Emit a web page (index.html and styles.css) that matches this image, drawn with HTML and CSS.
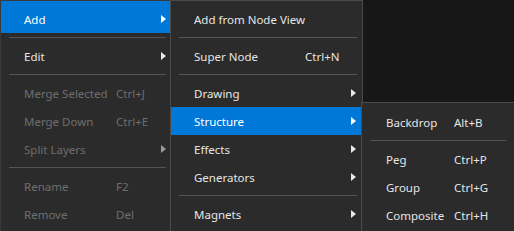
FILE: index.html
```html
<!DOCTYPE html>
<html>
<head>
<meta charset="utf-8">
<link rel="stylesheet" href="styles.css">
</head>
<body>
<div class="stage">
  <div class="menu menu-main">
    <div class="item active first"><span class="label">Add</span><span class="key"></span><span class="arrow"></span></div>
    <div class="sep"></div>
    <div class="item"><span class="label">Edit</span><span class="key"></span><span class="arrow"></span></div>
    <div class="sep"></div>
    <div class="item disabled"><span class="label">Merge Selected</span><span class="key">Ctrl+J</span></div>
    <div class="item disabled"><span class="label">Merge Down</span><span class="key">Ctrl+E</span></div>
    <div class="item disabled"><span class="label">Split Layers</span><span class="key"></span><span class="arrow"></span></div>
    <div class="sep"></div>
    <div class="item disabled"><span class="label">Rename</span><span class="key">F2</span></div>
    <div class="item disabled"><span class="label">Remove</span><span class="key">Del</span></div>
  </div>

  <div class="menu menu-add">
    <div class="item"><span class="label">Add from Node View</span></div>
    <div class="sep"></div>
    <div class="item"><span class="label">Super Node</span><span class="key">Ctrl+N</span></div>
    <div class="sep"></div>
    <div class="item"><span class="label">Drawing</span><span class="key"></span><span class="arrow"></span></div>
    <div class="item active"><span class="label">Structure</span><span class="key"></span><span class="arrow"></span></div>
    <div class="item"><span class="label">Effects</span><span class="key"></span><span class="arrow"></span></div>
    <div class="item"><span class="label">Generators</span><span class="key"></span><span class="arrow"></span></div>
    <div class="sep"></div>
    <div class="item"><span class="label">Magnets</span><span class="key"></span><span class="arrow"></span></div>
  </div>

  <div class="menu menu-structure">
    <div class="item"><span class="label">Backdrop</span><span class="key">Alt+B</span></div>
    <div class="sep"></div>
    <div class="item"><span class="label">Peg</span><span class="key">Ctrl+P</span></div>
    <div class="item"><span class="label">Group</span><span class="key">Ctrl+G</span></div>
    <div class="item"><span class="label">Composite</span><span class="key">Ctrl+H</span></div>
  </div>
</div>
</body>
</html>
```
FILE: styles.css
```css
html, body {
  margin: 0;
  padding: 0;
  background: #171717;
  overflow: hidden;
}

.stage {
  position: relative;
  width: 514px;
  height: 231px;
  overflow: hidden;
  font-family: "Noto Sans", "Open Sans", sans-serif;
  font-size: 11.5px;
  color: #e6e6e6;
}

.menu {
  box-sizing: border-box;
  background: #2b2b2b;
  border: 1px solid #444444;
  padding: 4px 0;
}

.menu-main {
  width: 171px;
  height: 260px;
  border-color: #3a3a3a;
  --label: 92px;
  --pl: 23px;
  --pr: 4px;
  --sep-r: 4px;
}

.menu-add {
  position: absolute;
  left: 170px;
  top: 0;
  width: 193px;
  height: 260px;
  border-color: #4a4a4a;
  --label: 111px;
  --pl: 23px;
  --pr: 6px;
  --sep-r: 5px;
}

.menu-structure {
  position: absolute;
  left: 361px;
  top: 102px;
  width: 170px;
  height: 160px;
  padding-top: 5px;
  border-color: #4a4a4a;
  --label: 68px;
  --pl: 24px;
  --pr: 6px;
  --sep-r: 24px;
}

.item {
  display: grid;
  grid-template-columns: var(--label) 1fr 5px;
  align-items: center;
  height: 28px;
  padding: 0 var(--pr) 0 var(--pl);
  white-space: nowrap;
}

.item.first.active {
  margin-top: -4px;
  padding-top: 4px;
  height: 32px;
  box-sizing: border-box;
}

.item.active {
  background: #0078d7;
  color: #ffffff;
}

.item.disabled {
  color: #6e6e6e;
}

.arrow {
  width: 0;
  height: 0;
  border-top: 4.5px solid transparent;
  border-bottom: 4.5px solid transparent;
  border-left: 5px solid #e8e8e8;
}

.item.disabled .arrow {
  border-left-color: #9a9a9a;
}

.item.active .arrow {
  border-left-color: #ffffff;
}

.sep {
  height: 1px;
  margin: 4px var(--sep-r) 4px 8px;
  background: #555555;
}
```
